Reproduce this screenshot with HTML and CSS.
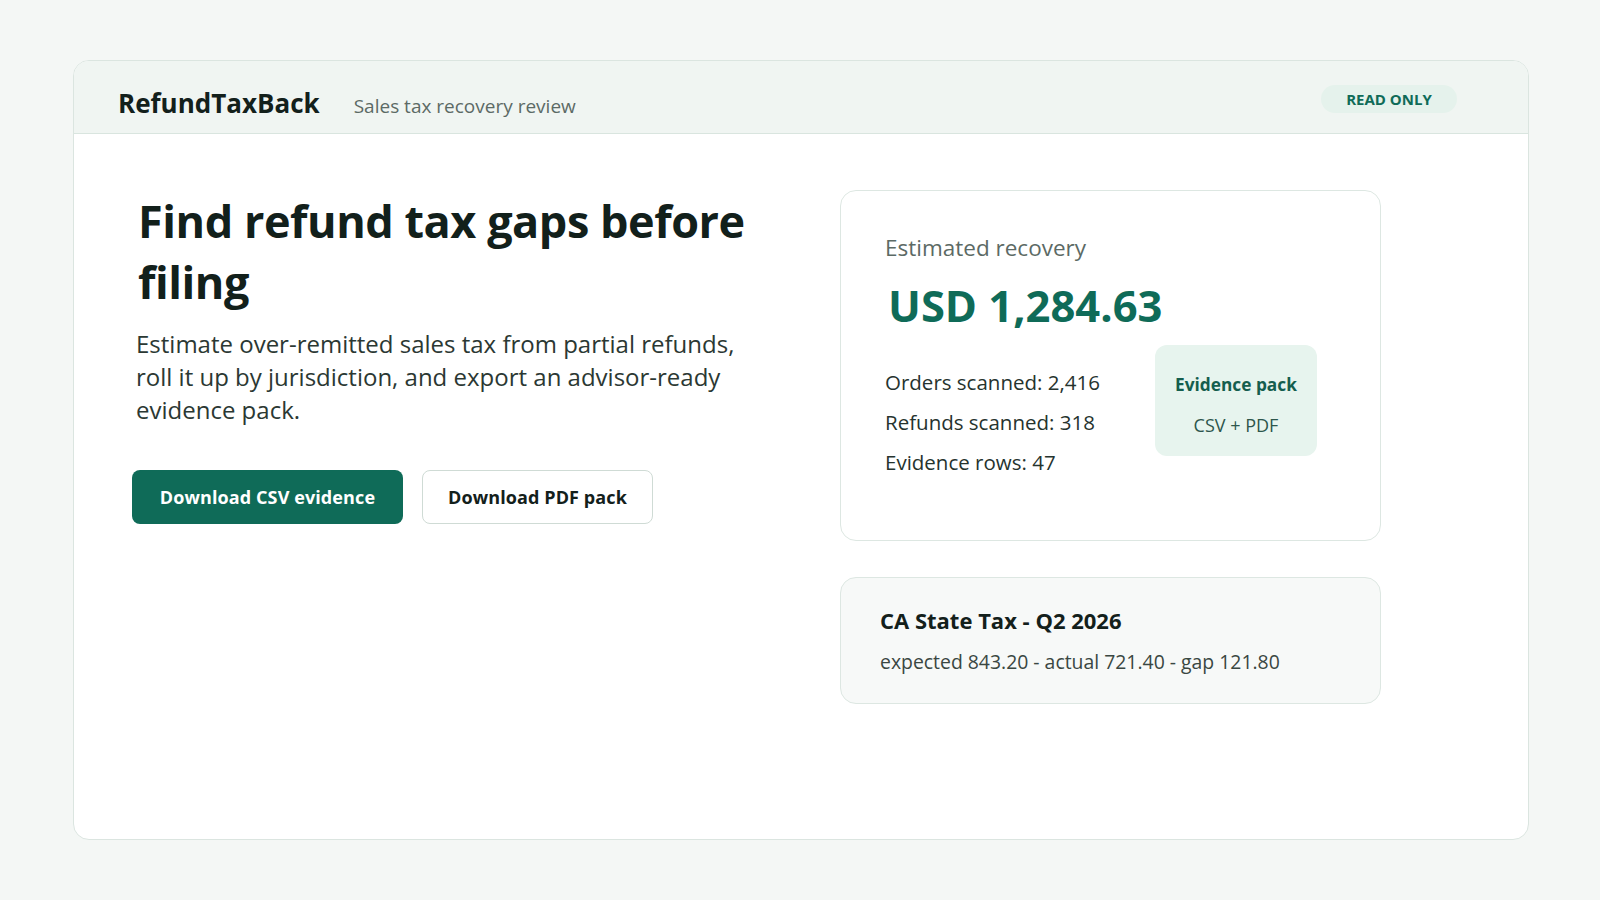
FILE: index.html
```html
<!DOCTYPE html>
<html lang="en">
<head>
    <meta charset="UTF-8">
    <meta name="viewport" content="width=device-width, initial-scale=1.0">
    <title>RefundTaxBack - Sales tax recovery review</title>
    <link rel="stylesheet" href="styles.css">
</head>
<body>
    <div class="shell">
        <header class="topbar">
            <div class="brand">
                <span class="logo">RefundTaxBack</span>
                <span class="tagline">Sales tax recovery review</span>
            </div>
            <span class="badge">READ ONLY</span>
        </header>

        <main class="main">
            <section class="hero">
                <h1>Find refund tax gaps before filing</h1>
                <p>Estimate over-remitted sales tax from partial refunds, roll it up by jurisdiction, and export an advisor-ready evidence pack.</p>
                <div class="actions">
                    <button type="button" class="btn primary">Download CSV evidence</button>
                    <button type="button" class="btn secondary">Download PDF pack</button>
                </div>
            </section>

            <aside class="side">
                <div class="card summary">
                    <div class="label">Estimated recovery</div>
                    <div class="amount">USD 1,284.63</div>
                    <div class="summary-row">
                        <ul class="stats">
                            <li>Orders scanned: 2,416</li>
                            <li>Refunds scanned: 318</li>
                            <li>Evidence rows: 47</li>
                        </ul>
                        <div class="pack">
                            <strong>Evidence pack</strong>
                            <span>CSV + PDF</span>
                        </div>
                    </div>
                </div>

                <div class="card gap-card">
                    <div class="gap-title">CA State Tax - Q2 2026</div>
                    <div class="gap-detail">expected 843.20 - actual 721.40 - gap 121.80</div>
                </div>
            </aside>
        </main>
    </div>
</body>
</html>
```

FILE: styles.css
```css
* {
    box-sizing: border-box;
}
body {
    margin: 0;
    padding: 60px 71px 0 73px;
    background-color: #f4f7f5;
    font-family: "Open Sans", "Noto Sans", sans-serif;
    color: #14221d;
}
.shell {
    height: 780px;
    background: #fff;
    border: 1px solid #dbe5e0;
    border-radius: 16px;
    overflow: hidden;
}
.topbar {
    height: 73px;
    display: flex;
    align-items: center;
    padding: 0 71px 0 44px;
    background-color: #f0f5f2;
    border-bottom: 1px solid #d9e5df;
}
.brand {
    display: flex;
    align-items: baseline;
    gap: 34px;
    margin-top: 12px;
}
.logo {
    font-size: 26px;
    font-weight: 700;
    color: #13201b;
}
.tagline {
    font-size: 19px;
    color: #5c6a65;
}
.badge {
    margin-left: auto;
    margin-top: 3px;
    width: 136px;
    height: 28px;
    line-height: 28px;
    text-align: center;
    border-radius: 14px;
    background-color: #e5f2ec;
    color: #0f6b58;
    font-size: 15px;
    font-weight: 700;
}

.main {
    display: grid;
    grid-template-columns: 650px 541px;
    column-gap: 58px;
    padding: 56px 0 0 58px;
}
.hero h1 {
    margin: 0;
    padding-left: 6px;
    font-size: 45px;
    line-height: 61px;
    font-weight: 700;
    letter-spacing: -0.45px;
    color: #12201b;
}
.hero p {
    max-width: 615px;
    margin: 15px 0 0;
    padding-left: 4px;
    font-size: 24px;
    line-height: 33px;
    color: #2b3833;
}
.actions {
    display: flex;
    gap: 19px;
    margin-top: 44px;
}
.btn {
    height: 54px;
    padding: 0;
    border-radius: 8px;
    font-family: inherit;
    font-size: 18px;
    font-weight: 700;
    letter-spacing: 0.1px;
    cursor: pointer;
}
.primary {
    width: 271px;
    background-color: #0f6b58;
    color: #fff;
    border: none;
}
.secondary {
    width: 231px;
    background-color: #fff;
    color: #13201b;
    border: 1px solid #cfdbd5;
}

.card {
    border: 1px solid #dde7e2;
    border-radius: 16px;
}
.summary {
    padding: 42px 44px 58px;
}
.label {
    font-size: 22.5px;
    line-height: 30px;
    color: #5c6a65;
}
.amount {
    margin-top: 17px;
    font-size: 43.5px;
    line-height: 52px;
    font-weight: 700;
    color: #0f6b58;
    padding-left: 3px;
}
.summary-row {
    display: flex;
    align-items: flex-start;
    margin-top: 13px;
}
.stats {
    list-style: none;
    margin: 0;
    padding: 17px 0 0;
    width: 270px;
}
.stats li {
    font-size: 20.5px;
    line-height: 40px;
    color: #26332e;
}
.pack {
    width: 162px;
    height: 111px;
    display: flex;
    flex-direction: column;
    align-items: center;
    gap: 16px;
    padding-top: 28px;
    border-radius: 12px;
    background-color: #e7f4ee;
    color: #155e4e;
}
.pack strong {
    font-size: 17.3px;
    line-height: 24px;
}
.pack span {
    font-size: 18px;
    line-height: 24px;
    color: #2d564c;
}
.gap-card {
    margin-top: 36px;
    padding: 28px 40px 28px 39px;
    background-color: #f7f9f8;
}
.gap-title {
    font-size: 22px;
    line-height: 28px;
    font-weight: 700;
    color: #13201b;
}
.gap-detail {
    margin-top: 15px;
    font-size: 19.4px;
    line-height: 26px;
    color: #3a4742;
}
```
